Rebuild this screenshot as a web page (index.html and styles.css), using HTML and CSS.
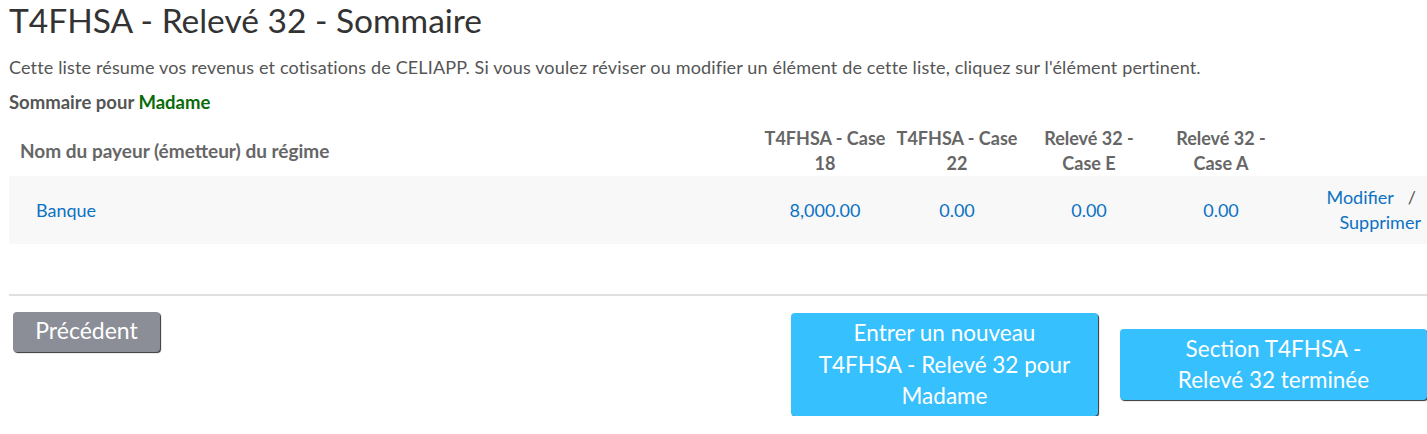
FILE: index.html
```html
<!DOCTYPE html>
<html lang="fr">
<head>
<meta charset="utf-8">
<title>T4FHSA - Relevé 32 - Sommaire</title>
<link rel="stylesheet" href="styles.css">
</head>
<body>
<div class="page">
  <h1 class="title">T4FHSA - Relevé 32 - Sommaire</h1>
  <p class="intro">Cette liste résume vos revenus et cotisations de CELIAPP. Si vous voulez réviser ou modifier un élément de cette liste, cliquez sur l'élément pertinent.</p>
  <p class="for">Sommaire pour <span class="who">Madame</span></p>

  <div class="table">
    <div class="row head">
      <div class="cell name">Nom du payeur (émetteur) du régime</div>
      <div class="cell num">T4FHSA - Case 18</div>
      <div class="cell num">T4FHSA - Case 22</div>
      <div class="cell num">Relevé 32 - Case E</div>
      <div class="cell num">Relevé 32 - Case A</div>
      <div class="cell act"></div>
    </div>
    <div class="row data">
      <div class="cell name"><a class="link" href="#">Banque</a></div>
      <div class="cell num"><a class="link" href="#">8,000.00</a></div>
      <div class="cell num"><a class="link" href="#">0.00</a></div>
      <div class="cell num"><a class="link" href="#">0.00</a></div>
      <div class="cell num"><a class="link" href="#">0.00</a></div>
      <div class="cell act"><a class="link" href="#">Modifier</a><span class="sep">/</span> <a class="link" href="#">Supprimer</a></div>
    </div>
  </div>

  <hr class="rule">

  <div class="actions">
    <button class="btn grey" type="button">Précédent</button>
    <div class="right">
      <button class="btn blue" type="button">Entrer un nouveau T4FHSA - Relevé 32 pour Madame</button>
      <button class="btn blue narrow" type="button">Section T4FHSA - Relevé 32 terminée</button>
    </div>
  </div>
</div>
</body>
</html>
```

FILE: styles.css
```css
* { box-sizing: border-box; }
html, body { margin: 0; padding: 0; background: #fff; }
body {
  font-family: Lato, "Noto Sans", "Liberation Sans", sans-serif;
  color: #555;
}
.page { padding: 0 0 0 9px; }
.title {
  margin: 0;
  padding-top: 1px;
  font-size: 33.5px;
  line-height: 38px;
  font-weight: 400;
  color: #333;
}
.intro {
  margin: 16px 0 0;
  font-size: 18px;
  line-height: 24px;
  letter-spacing: 0.15px;
  color: #555;
}
.for {
  margin: 11px 0 0;
  font-size: 18.5px;
  line-height: 24px;
  font-weight: 700;
  color: #555;
}
.who { color: #0a6b0a; }

.table { margin-top: 11px; }
.row {
  display: grid;
  grid-template-columns: 750px 132px 132px 132px 132px 1fr;
  align-items: center;
}
.head { height: 51px; font-weight: 700; color: #666; font-size: 18px; line-height: 25px; }
.head .name { font-size: 19px; padding-left: 11px; }
.data { height: 68px; background: #f8f8f8; font-size: 18px; line-height: 25px; }
.data .name { padding-left: 27px; }
.num { text-align: center; padding: 0 4px; }
.act { text-align: right; padding-right: 6px; }
.link { color: #0b72c4; text-decoration: none; }
.sep { color: #555; padding: 0 5px 0 14px; }

.rule {
  margin: 50px 0 0;
  border: 0;
  border-top: 2px solid #e0e0e0;
  height: 0;
}

.actions {
  display: flex;
  align-items: flex-start;
  margin-top: 16px;
}
.right {
  margin-left: auto;
  display: flex;
  align-items: center;
  gap: 22px;
  margin-top: 1px;
}
.btn {
  font-family: Lato, "Noto Sans", "Liberation Sans", sans-serif;
  border: 0;
  border-radius: 4px;
  color: #fff;
  cursor: pointer;
  box-shadow: 1px 1px 1px #333;
}
.grey {
  background: #8b8e96;
  margin-left: 4px;
  width: 147px;
  height: 40px;
  font-size: 23px;
  line-height: 32px;
  padding: 0 0 4px;
}
.blue {
  background: #36c0fd;
  width: 307px;
  font-size: 22.5px;
  line-height: 31.5px;
  padding: 4px 22px 4px;
}
.narrow { padding: 4px 40px 4px; }
```
